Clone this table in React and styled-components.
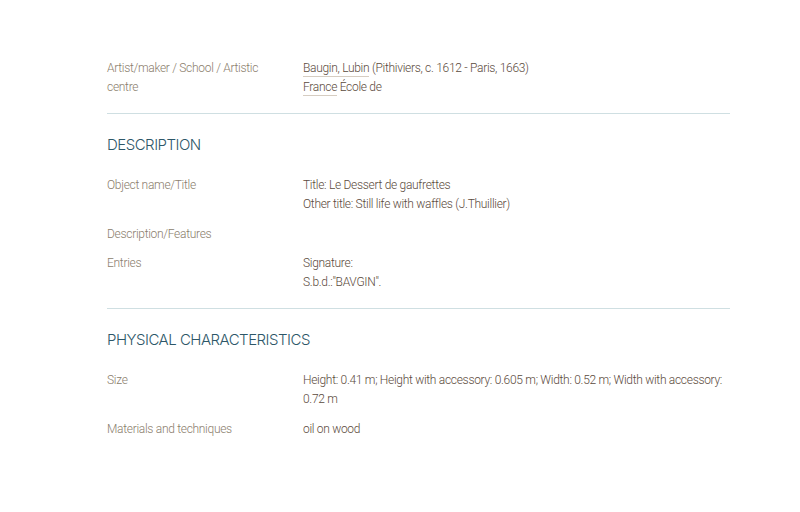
import React from 'react';
import styled, { createGlobalStyle } from 'styled-components';

const GlobalStyle = createGlobalStyle`
  body {
    margin: 0;
    background: #ffffff;
    font-family: Roboto, "Liberation Sans", sans-serif;
  }
`;

const Page = styled.div`
  width: 623px;
  padding: 59px 0 0 107px;
`;

const Section = styled.section`
  padding-bottom: 16px;
  border-bottom: ${(props) => (props.last ? 'none' : '1px solid #cfdfe2')};
  & + & {
    padding-top: 20px;
  }
`;

const Heading = styled.h2`
  margin: 0 0 20px;
  font-family: Inter, "Open Sans", sans-serif;
  font-size: 15px;
  font-weight: 300;
  letter-spacing: -0.5px;
  color: #2d5768;
  line-height: 22px;
`;

const Row = styled.div`
  display: grid;
  grid-template-columns: 196px 1fr;
  font-size: 12px;
  line-height: 19px;
  font-weight: 300;
  letter-spacing: -0.3px;
  & + & {
    margin-top: 10.5px;
  }
`;

const Label = styled.div`
  color: #8a7d6c;
  padding-right: 30px;
`;

const Value = styled.div`
  color: #5b4a3c;
`;

const Ref = styled.span`
  border-bottom: 1px solid #d6cdc2;
  padding-bottom: 1px;
`;

const Line = styled.div``;

const App = () => (
  <>
    <GlobalStyle />
    <Page>
      <Section>
        <Row>
          <Label>Artist/maker / School / Artistic centre</Label>
          <Value>
            <Line><Ref>Baugin, Lubin</Ref> (Pithiviers, c. 1612 - Paris, 1663)</Line>
            <Line><Ref>France</Ref> École de</Line>
          </Value>
        </Row>
      </Section>
      <Section>
        <Heading>DESCRIPTION</Heading>
        <Row>
          <Label>Object name/Title</Label>
          <Value>
            <Line>Title: Le Dessert de gaufrettes</Line>
            <Line>Other title: Still life with waffles (J.Thuillier)</Line>
          </Value>
        </Row>
        <Row>
          <Label>Description/Features</Label>
          <Value />
        </Row>
        <Row>
          <Label>Entries</Label>
          <Value>
            <Line>Signature:</Line>
            <Line>S.b.d.:"BAVGIN".</Line>
          </Value>
        </Row>
      </Section>
      <Section last>
        <Heading>PHYSICAL CHARACTERISTICS</Heading>
        <Row>
          <Label>Size</Label>
          <Value>Height: 0.41 m; Height with accessory: 0.605 m; Width: 0.52 m; Width with accessory: 0.72 m</Value>
        </Row>
        <Row>
          <Label>Materials and techniques</Label>
          <Value>oil on wood</Value>
        </Row>
      </Section>
    </Page>
  </>
);

export default App;
